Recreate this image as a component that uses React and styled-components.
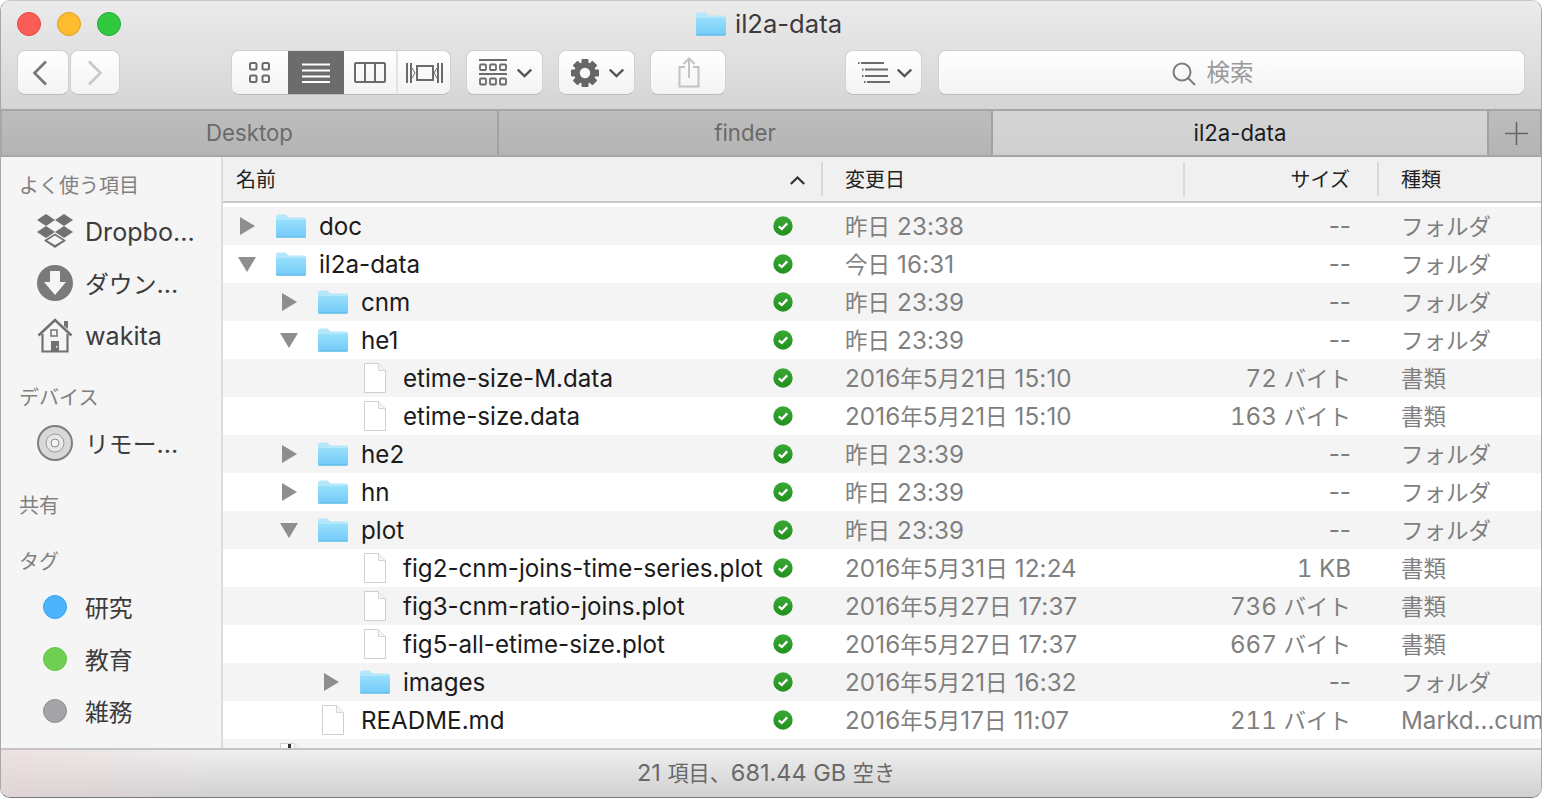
import React from "react";
import styled, { createGlobalStyle } from "styled-components";

const FONT = `Inter, "Noto Sans CJK JP", sans-serif`;

const GlobalStyle = createGlobalStyle`
  html, body {
    margin: 0;
    padding: 0;
    background: #fff;
  }
  * {
    box-sizing: border-box;
  }
`;

const Win = styled.div`
  width: 1542px;
  height: 798px;
  display: flex;
  flex-direction: column;
  overflow: hidden;
  border: 1px solid #a8a8a8;
  border-top-color: #c6c6c6;
  border-bottom-color: #777;
  border-radius: 10px;
  font-family: ${FONT};
  line-height: 1.2;
`;

const TitleBar = styled.div`
  height: 108px;
  flex: none;
  padding: 0 16px;
  background: linear-gradient(#ecebec, #d6d5d6);
`;

const TitleRow = styled.div`
  height: 46px;
  margin-bottom: 3px;
  display: grid;
  grid-template-columns: 1fr auto 1fr;
  align-items: center;
`;

const Lights = styled.div`
  display: flex;
  gap: 16px;
`;

const Light = styled.span`
  width: 24px;
  height: 24px;
  border-radius: 50%;
  background: ${p => p.$color};
  border: 1px solid ${p => p.$edge};
`;

const Title = styled.div`
  display: flex;
  align-items: center;
  gap: 9px;
  margin-right: 4px;
  font-size: 25.6px;
  color: #3c3a3c;
`;

const Toolbar = styled.div`
  display: flex;
  height: 45px;
`;

const Btn = styled.div`
  height: 45px;
  width: ${p => p.$w}px;
  margin-left: ${p => p.$ml || 0}px;
  display: flex;
  align-items: center;
  justify-content: center;
  gap: ${p => p.$gap || 0}px;
  padding: ${p => p.$pad || 0};
  background: linear-gradient(#fff, #f3f3f3);
  border: 1px solid #d2d2d2;
  border-bottom-color: #bcbcbc;
  border-radius: 8px;
`;

const ViewGroup = styled.div`
  display: flex;
  height: 45px;
  margin-left: 111px;
  border: 1px solid #d2d2d2;
  border-bottom-color: #bcbcbc;
  border-radius: 8px;
  overflow: hidden;
  background: linear-gradient(#fff, #f3f3f3);
`;

const ViewCell = styled.div`
  width: ${p => p.$w}px;
  flex: none;
  display: flex;
  align-items: center;
  justify-content: center;
  background: ${p => (p.$active ? "#6c6c6c" : "transparent")};
  border-right: ${p => (p.$line ? "2px solid #e4e4e4" : "none")};
`;

const Search = styled(Btn)`
  flex: none;
  gap: 11px;
  font-size: 23.5px;
  color: #9a9a9a;
  padding: 2px 38px 0 0;
`;

const Tabs = styled.div`
  height: 48px;
  flex: none;
  display: grid;
  grid-template-columns: 498px 494px 496px 1fr;
  border-top: 2px solid #a6a6a6;
  border-bottom: 2px solid #a6a6a6;
`;

const Tab = styled.div`
  display: flex;
  align-items: center;
  justify-content: center;
  font-size: 22.2px;
  padding-left: ${p => (p.$last ? 3 : 0)}px;
  border-left: ${p => (p.$first ? "1px" : "0")} solid #a6a6a6;
  border-right: ${p => (p.$last ? "1px" : "2px")} solid #a2a2a2;
  color: ${p => (p.$active ? "#1c1c1c" : "#6a6a6a")};
  background: ${p =>
    p.$active
      ? "linear-gradient(#d6d5d6, #cfced0)"
      : "linear-gradient(#bebdbe, #b5b4b5)"};
`;

const Body = styled.div`
  flex: 1;
  min-height: 0;
  display: flex;
`;

const Sidebar = styled.div`
  width: 222px;
  flex: none;
  padding-top: 8px;
  background: #f5f5f5;
  border-right: 2px solid #dcdcdc;
`;

const SideHead = styled.div`
  height: 40px;
  margin-top: ${p => p.$mt || 0}px;
  padding: 2px 0 0 18px;
  display: flex;
  align-items: center;
  font-size: 20px;
  color: #808080;
`;

const SideItem = styled.div`
  height: 52px;
  display: flex;
  align-items: center;
  font-size: 25.1px;
  color: #3c3c3c;
`;

const SideText = styled.div`
  padding-top: 2px;
  white-space: nowrap;
`;

const SideIcon = styled.div`
  width: 36px;
  margin-left: 36px;
  margin-right: 12px;
  display: flex;
  justify-content: center;
`;

const TagDot = styled.span`
  width: 24px;
  height: 24px;
  border-radius: 50%;
  background: ${p => p.$color};
  border: 1px solid ${p => p.$edge};
`;

const Main = styled.div`
  flex: 1;
  min-width: 0;
  overflow: hidden;
  background: #fff;
`;

const Columns = "600px 362px 194px 1fr";

const Header = styled.div`
  height: 46px;
  margin-bottom: 4px;
  display: grid;
  grid-template-columns: ${Columns};
  background: #f0f0f0;
  border-bottom: 2px solid #c8c8c8;
  font-size: 20px;
  color: #222;
`;

const HeadCell = styled.div`
  display: flex;
  align-items: center;
  justify-content: ${p => (p.$right ? "flex-end" : "space-between")};
  padding: ${p => p.$pad};
  margin: 5px 0;
  border-right: 2px solid ${p => (p.$noLine ? "transparent" : "#d9d9d9")};
`;

const Row = styled.div`
  height: 38px;
  display: grid;
  grid-template-columns: ${Columns};
  align-items: center;
  background: ${p => (p.$alt ? "#f4f4f4" : "#fff")};
  font-size: 24.2px;
  color: #7f7f7f;
  white-space: nowrap;
`;

const NameCell = styled.div`
  display: flex;
  align-items: center;
  height: 38px;
  padding-left: ${p => 12 + p.$depth * 42}px;
  padding-right: 30px;
  color: #1b1b1b;
`;

const Arrow = styled.div`
  width: 24px;
  margin-right: 17px;
  flex: none;
  display: flex;
  justify-content: center;
`;

const IconSlot = styled.div`
  width: 31px;
  flex: none;
  display: flex;
`;

const Name = styled.span`
  flex: 1;
  margin-left: 12px;
  padding-top: 2px;
`;

const DateCell = styled.div`
  padding: 2px 0 0 22px;
  letter-spacing: 0.1px;
`;

const SizeCell = styled.div`
  text-align: right;
  padding: 2px 28px 0 0;
  font-variant-numeric: ${p => (p.$digits ? "tabular-nums" : "normal")};
`;

const KindCell = styled.div`
  padding: 2px 0 0 22px;
  overflow: hidden;
`;

const StatusBar = styled.div`
  height: 49px;
  flex: none;
  display: flex;
  align-items: center;
  justify-content: center;
  padding-right: 10px;
  font-size: 23.5px;
  color: #686868;
  white-space: pre;
  border-top: 2px solid #c4c4c4;
  background: linear-gradient(90deg, rgba(235, 215, 215, 0.55), rgba(235, 215, 215, 0) 14%),
    linear-gradient(#efeeef, #d2d1d2);
`;

const Cjk = styled.span`
  font-size: ${p => p.$scale}em;
`;

// the kana and kanji in the shot run smaller than the latin next to them
const Mixed = ({ text, scale = 0.93 }) => (
  <span>
    {text.split(/([^\x00-\x7f]+)/).map((part, i) =>
      i % 2 ? (
        <Cjk key={i} $scale={scale}>
          {part}
        </Cjk>
      ) : (
        part
      )
    )}
  </span>
);

const GREY = "#6b6b6b";

const Folder = () => (
  <svg width="30" height="24" viewBox="0 0 30 24">
    <defs>
      <linearGradient id="fold" x1="0" y1="0" x2="0" y2="1">
        <stop offset="0" stopColor="#97e0fc" />
        <stop offset="1" stopColor="#73caf8" />
      </linearGradient>
    </defs>
    <path d="M0 3Q0 0.5 2.5 0.5H9.5L12.5 3.5H28Q30 3.5 30 5.5V22Q30 23.5 28.5 23.5H1.5Q0 23.5 0 22Z" fill="#b4e7fb" />
    <path d="M0 6H30V22Q30 23.5 28.5 23.5H1.5Q0 23.5 0 22Z" fill="url(#fold)" />
    <path d="M0.5 23H29.5" stroke="#5db5e2" strokeWidth="1" />
  </svg>
);

const FileIcon = ({ mark }) => (
  <svg width="31" height="32" viewBox="0 0 31 32">
    <path d="M4.5 1.5H18.5L25.5 8.5V30.5H4.5Z" fill="#fff" stroke="#cfcfcf" strokeWidth="1" strokeLinejoin="round" />
    <path d="M18.5 1.5V8.5H25.5" fill="#f4f4f4" stroke="#d6d6d6" strokeWidth="1" />
    {mark && <rect x="12" y="2" width="3" height="7" fill="#333" />}
  </svg>
);

const RightArrow = () => (
  <svg width="15" height="18" viewBox="0 0 15 18">
    <path d="M0 0L15 9L0 18Z" fill="#8e8e8e" />
  </svg>
);

const DownArrow = () => (
  <svg width="18" height="15" viewBox="0 0 18 15">
    <path d="M0 0H18L9 15Z" fill="#8e8e8e" />
  </svg>
);

const Check = () => (
  <svg width="20" height="20" viewBox="0 0 20 20" style={{ flex: "none", marginTop: "-1px" }}>
    <defs>
      <linearGradient id="chk" x1="0" y1="0" x2="0" y2="1">
        <stop offset="0" stopColor="#3aa835" />
        <stop offset="1" stopColor="#22901f" />
      </linearGradient>
    </defs>
    <circle cx="10" cy="10" r="9.7" fill="url(#chk)" />
    <path d="M5.8 10.3L8.8 13L14.2 7.4" fill="none" stroke="#fff" strokeWidth="2.3" />
  </svg>
);

const Chevron = () => (
  <svg width="15" height="10" viewBox="0 0 15 10">
    <path d="M0.8 1.5L7.5 8L14.2 1.5" fill="none" stroke="#555" strokeWidth="2.4" />
  </svg>
);

const IconGridView = () => (
  <svg width="22" height="22" viewBox="0 0 22 22" fill="none" stroke={GREY} strokeWidth="2">
    <rect x="1" y="1" width="6.5" height="6.5" rx="1.5" />
    <rect x="13.5" y="1" width="6.5" height="6.5" rx="1.5" />
    <rect x="1" y="13.5" width="6.5" height="6.5" rx="1.5" />
    <rect x="13.5" y="13.5" width="6.5" height="6.5" rx="1.5" />
  </svg>
);

const IconListView = () => (
  <svg width="30" height="20" viewBox="0 0 30 20" stroke="#fff" strokeWidth="2">
    <path d="M1 1.5H29M1 7.5H29M1 13.5H29M1 19H29" />
  </svg>
);

const IconColumnView = () => (
  <svg width="32" height="21" viewBox="0 0 32 21" fill="none" stroke={GREY} strokeWidth="2">
    <rect x="1" y="1" width="30" height="19" rx="1" />
    <path d="M11 1V20M21 1V20" />
  </svg>
);

const IconCoverView = () => (
  <svg width="37" height="20" viewBox="0 0 37 20" fill="none" stroke={GREY} strokeWidth="2">
    <path d="M1 0V20M5 0V20M32 0V20M36 0V20" />
    <rect x="11" y="3" width="16" height="14" />
    <path d="M6 5L9 10L6 15M31 5L28 10L31 15" strokeWidth="1" />
  </svg>
);

const IconArrange = () => (
  <svg width="28" height="27" viewBox="0 0 28 27" fill="none" stroke={GREY}>
    <path d="M0 1H28M0 15H28" strokeWidth="2" />
    <g strokeWidth="1.8">
      <rect x="1" y="5.5" width="6" height="5.5" rx="1" />
      <rect x="11" y="5.5" width="6" height="5.5" rx="1" />
      <rect x="21" y="5.5" width="6" height="5.5" rx="1" />
      <rect x="1" y="19.5" width="6" height="6" rx="1" />
      <rect x="11" y="19.5" width="6" height="6" rx="1" />
      <rect x="21" y="19.5" width="6" height="6" rx="1" />
    </g>
  </svg>
);

const IconGear = () => (
  <svg width="28" height="28" viewBox="0 0 28 28">
    <g fill="#666">
      {[0, 45, 90, 135, 180, 225, 270, 315].map(a => (
        <rect key={a} x="10.5" y="0" width="7" height="8" rx="1" transform={`rotate(${a} 14 14)`} />
      ))}
    </g>
    <circle cx="14" cy="14" r="8" fill="none" stroke="#666" strokeWidth="5.5" />
  </svg>
);

const IconShare = () => (
  <svg width="22" height="31" viewBox="0 0 22 31" fill="none" stroke="#c2c2c2" strokeWidth="2">
    <path d="M7 10H1.5V29.5H20.5V10H15" />
    <path d="M11 21V1.5M5.5 7L11 1.5L16.5 7" />
  </svg>
);

const IconSort = () => (
  <svg width="32" height="21" viewBox="0 0 32 21" stroke={GREY} strokeWidth="2" fill="none">
    <path d="M3 1H26M7 7.5H30M7 14H30M9 20H32" />
    <path d="M0 1H1.5M4 7.5H5.5M4 14H5.5M6 20H7.5" />
  </svg>
);

const IconSearch = () => (
  <svg width="24" height="24" viewBox="0 0 24 24" fill="none" stroke="#7d7d7d" strokeWidth="2">
    <circle cx="10" cy="10" r="8.5" />
    <path d="M16 16L23 23" />
  </svg>
);

const Caret = () => (
  <svg width="15" height="9" viewBox="0 0 15 9">
    <path d="M0.8 8L7.5 1.5L14.2 8" fill="none" stroke="#333" strokeWidth="2.2" />
  </svg>
);

const Plus = () => (
  <svg width="23" height="23" viewBox="0 0 23 23" stroke="#666" strokeWidth="1.6">
    <path d="M0 11.5H23M11.5 0V23" />
  </svg>
);

const IconDropbox = () => (
  <svg width="36" height="34" viewBox="0 0 36 34">
    <g fill="#717171">
      <path d="M9 0L18 6L9 12L0 6Z" />
      <path d="M27 0L36 6L27 12L18 6Z" />
      <path d="M9 12L18 18L9 24L0 18Z" />
      <path d="M27 12L36 18L27 24L18 18Z" />
    </g>
    <path d="M8.5 26.5L18 20.5L27.5 26.5L18 33Z" fill="#f5f5f5" stroke="#717171" strokeWidth="1.6" />
    <path d="M8.5 26.5L18 32L27.5 26.5" fill="none" stroke="#717171" strokeWidth="1.6" />
  </svg>
);

const IconDownload = () => (
  <svg width="36" height="36" viewBox="0 0 36 36">
    <circle cx="18" cy="18" r="18" fill="#7a7a7a" />
    <path d="M13 6H23V17H29L18 30L7 17H13Z" fill="#f5f5f5" />
  </svg>
);

const IconHome = () => (
  <svg width="36" height="35" viewBox="0 0 36 35">
    <path d="M27 3H31V11L27 8Z" fill="#717171" />
    <path d="M18 3L6 15V33H30V15Z" fill="#f5f5f5" />
    <path d="M1.5 17.5L18 2L34.5 17.5" fill="none" stroke="#717171" strokeWidth="2.6" />
    <path d="M5.5 16V33.5H30.5V16" fill="none" stroke="#717171" strokeWidth="2.2" />
    <rect x="14" y="12" width="6" height="6" fill="none" stroke="#717171" strokeWidth="1.5" />
    <rect x="14" y="23" width="8" height="11" fill="#717171" />
    <rect x="19" y="28" width="1.5" height="1.5" fill="#f5f5f5" />
  </svg>
);

const IconDisc = () => (
  <svg width="36" height="36" viewBox="0 0 36 36" fill="none">
    <circle cx="18" cy="18" r="17" fill="#d8d8d8" stroke="#7f7f7f" strokeWidth="2" />
    <circle cx="18" cy="18" r="9" fill="#e8e8e8" stroke="#9a9a9a" strokeWidth="1" />
    <circle cx="18" cy="18" r="4" fill="#f5f5f5" stroke="#8a8a8a" strokeWidth="1" />
  </svg>
);

const folderKind = "フォルダ";
const docKind = "書類";

const rows = [
  { depth: 0, type: "folder", arrow: "right", name: "doc", date: "昨日 23:38", size: "--", kind: folderKind },
  { depth: 0, type: "folder", arrow: "down", name: "il2a-data", date: "今日 16:31", size: "--", kind: folderKind },
  { depth: 1, type: "folder", arrow: "right", name: "cnm", date: "昨日 23:39", size: "--", kind: folderKind },
  { depth: 1, type: "folder", arrow: "down", name: "he1", date: "昨日 23:39", size: "--", kind: folderKind },
  { depth: 2, type: "file", name: "etime-size-M.data", date: "2016年5月21日 15:10", size: "72 バイト", kind: docKind },
  { depth: 2, type: "file", name: "etime-size.data", date: "2016年5月21日 15:10", size: "163 バイト", kind: docKind },
  { depth: 1, type: "folder", arrow: "right", name: "he2", date: "昨日 23:39", size: "--", kind: folderKind },
  { depth: 1, type: "folder", arrow: "right", name: "hn", date: "昨日 23:39", size: "--", kind: folderKind },
  { depth: 1, type: "folder", arrow: "down", name: "plot", date: "昨日 23:39", size: "--", kind: folderKind },
  { depth: 2, type: "file", name: "fig2-cnm-joins-time-series.plot", date: "2016年5月31日 12:24", size: "1 KB", kind: docKind },
  { depth: 2, type: "file", name: "fig3-cnm-ratio-joins.plot", date: "2016年5月27日 17:37", size: "736 バイト", kind: docKind },
  { depth: 2, type: "file", name: "fig5-all-etime-size.plot", date: "2016年5月27日 17:37", size: "667 バイト", kind: docKind },
  { depth: 2, type: "folder", arrow: "right", name: "images", date: "2016年5月21日 16:32", size: "--", kind: folderKind },
  { depth: 1, type: "file", name: "README.md", date: "2016年5月17日 11:07", size: "211 バイト", kind: "Markd...cument" },
  { depth: 0, type: "file", mark: true, name: "", date: "", size: "", kind: "" },
];

const App = () => (
  <>
    <GlobalStyle />
    <Win>
      <TitleBar>
        <TitleRow>
          <Lights>
            <Light $color="#fc5c57" $edge="#e3463f" />
            <Light $color="#fdbb2e" $edge="#e09e1e" />
            <Light $color="#30c93f" $edge="#24a92e" />
          </Lights>
          <Title>
            <Folder />
            il2a-data
          </Title>
        </TitleRow>
        <Toolbar>
          <Btn $w={52} $pad="0 5px 0 0">
            <svg width="16" height="26" viewBox="0 0 16 26" fill="none" stroke="#777" strokeWidth="2.6">
              <path d="M14 1.5L2.5 13L14 24.5" />
            </svg>
          </Btn>
          <Btn $w={50} $ml={1}>
            <svg width="16" height="26" viewBox="0 0 16 26" fill="none" stroke="#c8c8c8" strokeWidth="2.6">
              <path d="M2 1.5L13.5 13L2 24.5" />
            </svg>
          </Btn>
          <ViewGroup>
            <ViewCell $w={56}>
              <IconGridView />
            </ViewCell>
            <ViewCell $w={56} $active>
              <IconListView />
            </ViewCell>
            <ViewCell $w={54} $line>
              <IconColumnView />
            </ViewCell>
            <ViewCell $w={53}>
              <IconCoverView />
            </ViewCell>
          </ViewGroup>
          <Btn $w={77} $ml={15} $gap={10} $pad="0 0 0 2px">
            <IconArrange />
            <Chevron />
          </Btn>
          <Btn $w={77} $ml={15} $gap={10} $pad="0 0 0 2px">
            <IconGear />
            <Chevron />
          </Btn>
          <Btn $w={77} $ml={15} $pad="0 0 0 2px">
            <IconShare />
          </Btn>
          <Btn $w={77} $ml={119} $gap={7} $pad="0 0 0 3px">
            <IconSort />
            <Chevron />
          </Btn>
          <Search $w={587} $ml={16}>
            <IconSearch />
            検索
          </Search>
        </Toolbar>
      </TitleBar>
      <Tabs>
        <Tab $first>Desktop</Tab>
        <Tab>finder</Tab>
        <Tab $active>il2a-data</Tab>
        <Tab $last>
          <Plus />
        </Tab>
      </Tabs>
      <Body>
        <Sidebar>
          <SideHead>よく使う項目</SideHead>
          <SideItem>
            <SideIcon>
              <IconDropbox />
            </SideIcon>
            <SideText>Dropbo...</SideText>
          </SideItem>
          <SideItem>
            <SideIcon>
              <IconDownload />
            </SideIcon>
            <SideText>
              <Mixed text="ダウン..." scale={0.95} />
            </SideText>
          </SideItem>
          <SideItem>
            <SideIcon>
              <IconHome />
            </SideIcon>
            <SideText>wakita</SideText>
          </SideItem>
          <SideHead $mt={16}>デバイス</SideHead>
          <SideItem>
            <SideIcon>
              <IconDisc />
            </SideIcon>
            <SideText>
              <Mixed text="リモー..." scale={0.95} />
            </SideText>
          </SideItem>
          <SideHead $mt={16}>共有</SideHead>
          <SideHead $mt={16}>タグ</SideHead>
          <SideItem>
            <SideIcon>
              <TagDot $color="#4db3fb" $edge="#36a6f6" />
            </SideIcon>
            <SideText>
              <Mixed text="研究" scale={0.95} />
            </SideText>
          </SideItem>
          <SideItem>
            <SideIcon>
              <TagDot $color="#6ecf52" $edge="#62c846" />
            </SideIcon>
            <SideText>
              <Mixed text="教育" scale={0.95} />
            </SideText>
          </SideItem>
          <SideItem>
            <SideIcon>
              <TagDot $color="#a4a4a6" $edge="#8f8f91" />
            </SideIcon>
            <SideText>
              <Mixed text="雑務" scale={0.95} />
            </SideText>
          </SideItem>
        </Sidebar>
        <Main>
          <Header>
            <HeadCell $pad="2px 16px 0 13px">
              名前
              <Caret />
            </HeadCell>
            <HeadCell $pad="2px 0 0 22px">変更日</HeadCell>
            <HeadCell $pad="2px 27px 0 0" $right>
              サイズ
            </HeadCell>
            <HeadCell $pad="2px 0 0 22px" $noLine>
              種類
            </HeadCell>
          </Header>
          {rows.map((r, i) => (
            <Row key={i} $alt={i % 2 === 0}>
              <NameCell $depth={r.depth}>
                <Arrow>
                  {r.arrow === "right" && <RightArrow />}
                  {r.arrow === "down" && <DownArrow />}
                </Arrow>
                <IconSlot>{r.type === "folder" ? <Folder /> : <FileIcon mark={r.mark} />}</IconSlot>
                <Name>{r.name}</Name>
                <Check />
              </NameCell>
              <DateCell>
                <Mixed text={r.date} />
              </DateCell>
              <SizeCell $digits={r.size !== "--"}>
                <Mixed text={r.size} />
              </SizeCell>
              <KindCell>
                <Mixed text={r.kind} />
              </KindCell>
            </Row>
          ))}
        </Main>
      </Body>
      <StatusBar>
        <Mixed text="21 項目、681.44 GB 空き" scale={0.9} />
      </StatusBar>
    </Win>
  </>
);

export default App;
